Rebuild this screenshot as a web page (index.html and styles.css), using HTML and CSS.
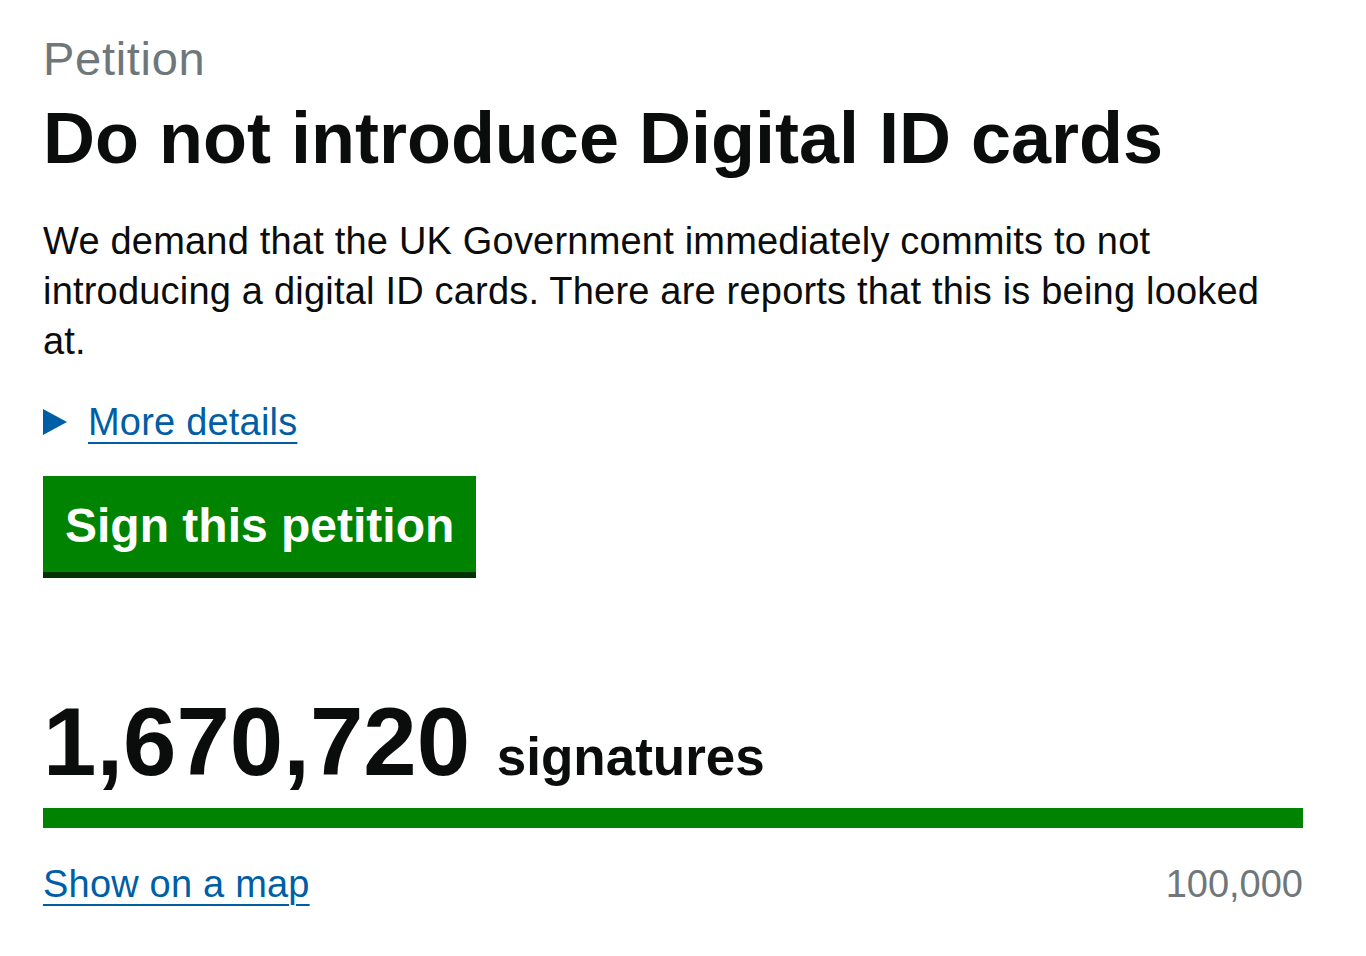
FILE: index.html
```html
<!DOCTYPE html>
<html lang="en">
<head>
<meta charset="utf-8">
<title>Do not introduce Digital ID cards - Petitions</title>
<link rel="stylesheet" href="styles.css">
</head>
<body>
<main class="page">
  <span class="caption">Petition</span>
  <h1 class="title">Do not introduce Digital ID cards</h1>
  <p class="summary">We demand that the UK Government immediately commits to not introducing a digital ID cards. There are reports that this is being looked at.</p>
  <div class="details">
    <svg class="details-arrow" width="24" height="26" viewBox="0 0 24 26" aria-hidden="true"><polygon points="0,0 24,13 0,26" fill="#005ea5"/></svg>
    <a class="link" href="#">More details</a>
  </div>
  <a class="button" href="#">Sign this petition</a>
  <div class="signatures"><span class="count">1,670,720</span> <span class="count-label">signatures</span></div>
  <div class="progress"><div class="progress-fill" style="width:100%"></div></div>
  <div class="progress-foot">
    <a class="link" href="#">Show on a map</a>
    <span class="threshold">100,000</span>
  </div>
</main>
</body>
</html>
```
FILE: styles.css
```css
html, body {
  margin: 0;
  padding: 0;
  background: #ffffff;
}
body {
  font-family: "Liberation Sans", Arial, Helvetica, sans-serif;
  color: #0b0c0c;
}
.page {
  width: 1260px;
  padding: 34px 0 0 43px;
}
.caption {
  display: block;
  font-size: 47px;
  line-height: 50px;
  letter-spacing: 0.7px;
  color: #6f777b;
}
.title {
  margin: 14px 0 0;
  font-size: 72px;
  line-height: 80px;
  font-weight: 700;
}
.summary {
  margin: 38px 0 0;
  font-size: 38px;
  line-height: 50px;
  letter-spacing: 0.2px;
}
.details {
  margin-top: 31px;
  display: flex;
  align-items: center;
  gap: 21px;
  height: 50px;
}
.details-arrow {
  display: block;
  flex: none;
}
.link {
  color: #005ea5;
  font-size: 38px;
  line-height: 50px;
  letter-spacing: 0.2px;
  text-decoration: underline;
  text-decoration-thickness: 2px;
  text-underline-offset: 7px;
}
.button {
  display: inline-block;
  margin-top: 29px;
  padding: 22px 22px 18px;
  background: #008300;
  box-shadow: 0 6px 0 #003300;
  color: #ffffff;
  font-size: 48px;
  line-height: 56px;
  font-weight: 700;
  text-decoration: none;
}
.signatures {
  margin-top: 115px;
  font-size: 96px;
  line-height: 110px;
  font-weight: 700;
  white-space: nowrap;
}
.count {
  font-size: 96px;
}
.count-label {
  font-size: 53px;
  line-height: 1;
}
.progress {
  margin-top: 11px;
  height: 20px;
  background: #dee0e2;
}
.progress-fill {
  height: 100%;
  background: #008300;
}
.progress-foot {
  margin-top: 31px;
  display: flex;
  justify-content: space-between;
  align-items: baseline;
}
.threshold {
  font-size: 38px;
  line-height: 50px;
  color: #6f777b;
}
```
